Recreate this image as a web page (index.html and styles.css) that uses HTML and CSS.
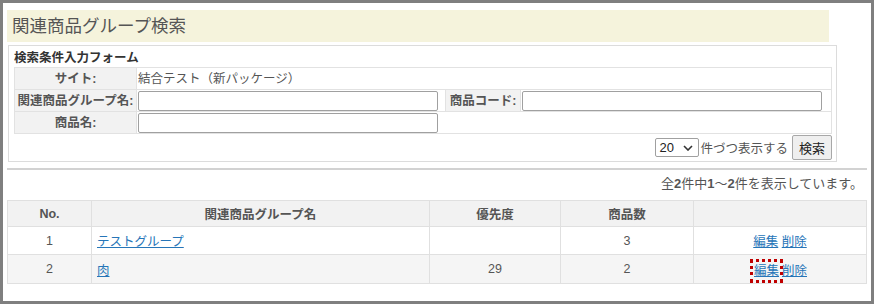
FILE: index.html
```html
<!DOCTYPE html>
<html lang="ja">
<head>
    <meta charset="UTF-8">
    <title>関連商品グループ検索</title>
    <link rel="stylesheet" href="styles.css">
</head>
<body>

<div class="frame">
    <h1 class="page-title">関連商品グループ検索</h1>

    <form class="search-box">
        <div class="search-heading">検索条件入力フォーム</div>
        <table class="search-table">
            <colgroup>
                <col class="c-label1">
                <col class="c-input1">
                <col class="c-label2">
                <col class="c-input2">
            </colgroup>
            <tr>
                <th>サイト:</th>
                <td colspan="3" class="site-name">結合テスト（新パッケージ）</td>
            </tr>
            <tr>
                <th>関連商品グループ名:</th>
                <td><input type="text" class="text-input"></td>
                <th>商品コード:</th>
                <td><input type="text" class="text-input"></td>
            </tr>
            <tr>
                <th>商品名:</th>
                <td colspan="3"><input type="text" class="text-input"></td>
            </tr>
        </table>

        <div class="search-actions">
            <span class="select-wrap">
                <select class="per-page">
                    <option>20</option>
                </select>
                <svg class="select-arrow" width="10" height="6" viewBox="0 0 10 6">
                    <path d="M1 1 L5 5 L9 1" fill="none" stroke="#333" stroke-width="1.6"/>
                </svg>
            </span>
            <span class="per-page-label">件づつ表示する</span>
            <button type="button" class="search-button">検索</button>
        </div>
    </form>

    <div class="divider"></div>

    <p class="result-count">全<b>2</b>件中<b>1</b>〜<b>2</b>件を表示しています。</p>

    <table class="result-table">
        <colgroup>
            <col class="c-no">
            <col class="c-name">
            <col class="c-priority">
            <col class="c-count">
            <col class="c-actions">
        </colgroup>
        <tr>
            <th>No.</th>
            <th>関連商品グループ名</th>
            <th>優先度</th>
            <th>商品数</th>
            <th></th>
        </tr>
        <tr>
            <td class="center">1</td>
            <td><a href="#">テストグループ</a></td>
            <td class="center"></td>
            <td class="center">3</td>
            <td class="center"><a href="#">編集</a> <a href="#">削除</a></td>
        </tr>
        <tr class="odd">
            <td class="center">2</td>
            <td><a href="#">肉</a></td>
            <td class="center">29</td>
            <td class="center">2</td>
            <td class="center"><a href="#" class="marked">編集</a><a href="#">削除</a></td>
        </tr>
    </table>
</div>

</body>
</html>
```

FILE: styles.css
```css
* {
    box-sizing: border-box;
}

body {
    margin: 0;
    background: #fff;
    font-family: "Liberation Sans", "Noto Sans CJK JP", sans-serif;
    font-size: 12.5px;
    color: #555;
}

.frame {
    width: 874px;
    height: 304px;
    border: 3px solid #7f7f7f;
    padding: 7px 0 0 4px;
}

.page-title {
    margin: 0;
    width: 822px;
    height: 32px;
    padding-left: 5px;
    background: #f5f3dc;
    font-size: 17.5px;
    font-weight: normal;
    line-height: 32px;
    color: #555;
}

/* search form */
.search-box {
    margin: 3px 0 0 1px;
    width: 829px;
    height: 117px;
    border: 1px solid #dcdcdc;
    padding: 4px 4px 0 5px;
}

.search-heading {
    font-weight: bold;
    color: #333;
    font-size: 12.5px;
    line-height: 16px;
}

.search-table {
    border-collapse: collapse;
    width: 818px;
    margin-top: 1px;
}

.search-table th,
.search-table td {
    border: 1px solid #e2e2e2;
    height: 22px;
    padding: 0 1px;
    line-height: 18px;
}

.search-table th {
    background: #f2f2f2;
    text-align: center;
    font-weight: bold;
    color: #555;
    white-space: nowrap;
}

.c-label1 { width: 122px; }
.c-input1 { width: 309px; }
.c-label2 { width: 75px; }

.site-name {
    color: #555;
}

.text-input {
    display: block;
    width: 300px;
    height: 20px;
    border: 1px solid #a0a0a0;
    border-radius: 2px;
    padding: 0 3px;
    font: inherit;
}

.search-actions {
    display: flex;
    justify-content: flex-end;
    align-items: center;
    width: 818px;
    margin-top: 1px;
    height: 25px;
}

.select-wrap {
    position: relative;
    display: inline-block;
    height: 19px;
}

.per-page {
    appearance: none;
    display: block;
    width: 44px;
    height: 19px;
    padding: 0 0 0 3px;
    font-family: inherit;
    font-size: 13px;
    line-height: 17px;
    color: #222;
    border: 1px solid #a0a0a0;
    border-radius: 2px;
    background: #fff;
}

.select-arrow {
    position: absolute;
    right: 6px;
    top: 7px;
    pointer-events: none;
}

.per-page-label {
    margin: 0 4px 0 1px;
    font-size: 12.5px;
}

.search-button {
    width: 40px;
    height: 25px;
    padding: 0;
    font-family: inherit;
    font-size: 13px;
    color: #222;
    background: #efefef;
    border: 1px solid #a8a8a8;
    border-radius: 2px;
}

.divider {
    margin-top: 6px;
    width: 860px;
    border-top: 2px solid #d2d2d2;
}

.result-count {
    margin: 0;
    width: 856px;
    height: 30px;
    line-height: 28px;
    text-align: right;
    font-size: 13px;
}

/* result list */
.result-table {
    border-collapse: collapse;
    width: 860px;
}

.result-table th,
.result-table td {
    border: 1px solid #e0e0e0;
    padding: 0 5px;
}

.result-table th {
    height: 26px;
    background: #f2f2f2;
    font-weight: bold;
    text-align: center;
}

.result-table td {
    height: 28px;
}

.result-table .odd td {
    background: #f5f5f5;
    height: 29px;
}

.c-no { width: 84px; }
.c-name { width: 338px; }
.c-priority { width: 131px; }
.c-count { width: 133px; }

.center {
    text-align: center;
}

a[href] {
    color: #2675b8;
    text-decoration: underline;
}

.marked {
    outline: 3px dotted #c00000;
    outline-offset: 0;
    padding: 2px 1px;
    margin-right: 2px;
}
```
